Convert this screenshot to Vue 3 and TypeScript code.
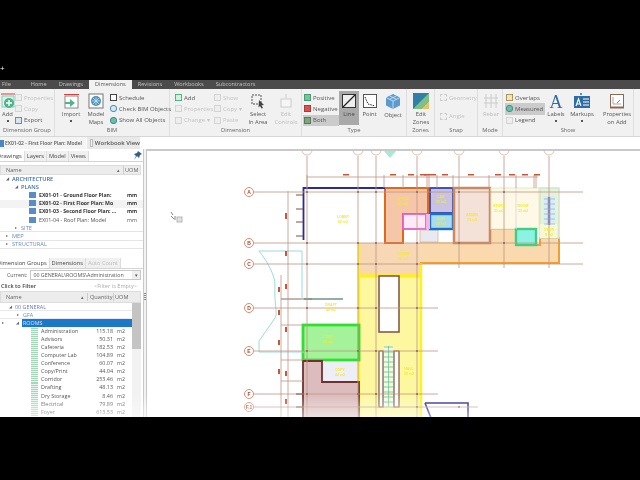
<script setup lang="ts">
const tabs = ['File', 'Home', 'Drawings', 'Dimensions', 'Revisions', 'Workbooks', 'Subcontractors']

interface TreeRow { label: string; pad: number; kind: string; arrow?: string; uom?: string }
const tree: TreeRow[] = [
  { label: 'ARCHITECTURE', pad: 6, kind: 'folder', arrow: '◢' },
  { label: 'PLANS', pad: 15, kind: 'folder', arrow: '◢' },
  { label: 'EX01-01 - Ground Floor Plan:', pad: 29, kind: 'bold', uom: 'mm' },
  { label: 'EX01-02 - First Floor Plan: Mo', pad: 29, kind: 'bold hover', uom: 'mm' },
  { label: 'EX01-03 - Second Floor Plan: ...', pad: 29, kind: 'bold', uom: 'mm' },
  { label: 'EX01-04 - Roof Plan: Model', pad: 29, kind: 'sheet-row', uom: 'mm' },
  { label: 'SITE', pad: 15, kind: 'folder muted', arrow: '▸' },
  { label: 'MEP', pad: 6, kind: 'folder muted', arrow: '▸' },
  { label: 'STRUCTURAL', pad: 6, kind: 'folder muted', arrow: '▸' },
]

const rooms = [
  ['Administration', '115.18'], ['Advisors', '50.31'], ['Cafeteria', '182.53'],
  ['Computer Lab', '104.89'], ['Conference', '60.07'], ['Copy/Print', '44.04'],
  ['Corridor', '253.46'], ['Drafting', '48.13'], ['Dry Storage', '8.46'],
  ['Electrical', '79.89'], ['Foyer', '613.53'],
]

const gridX = [307, 358, 376, 417, 459, 504, 549]
const gridLetters: [string, number, number][] = [
  ['A', 192, 583], ['B', 243, 583], ['C', 264, 583], ['D', 308, 438],
  ['E', 351, 438], ['F', 394, 438], ['F.1', 407, 478],
]
const topTicks = [307, 384, 403, 417, 427, 429, 437, 453, 489, 516, 534, 536]
const redMarks = [346, 393, 411, 423, 427, 433, 445, 471, 498, 512, 525, 537]
const anchors: [number, number][] = [
  [307, 192], [358, 192], [376, 192], [417, 192], [459, 192], [504, 192],
  [307, 243], [358, 243], [376, 243], [417, 243], [459, 243], [504, 243],
  [307, 264], [358, 264], [376, 264], [417, 264],
  [307, 308], [358, 308], [376, 308], [417, 308],
  [307, 351], [358, 351], [376, 351], [417, 351],
  [307, 394], [358, 394], [376, 394], [417, 394], [417, 407], [459, 407],
]
const roomTags: [string, string, number, number][] = [
  ['LOBBY', '82', 343, 218], ['OFFICE', '41', 403, 200], ['FOYER', '96', 403, 255], ['LAB', '19', 441, 198],
  ['BAR', '12', 441, 220], ['ADMIN', '73', 472, 216], ['STORE', '31', 499, 207], ['ROOM', '33', 523, 207],
  ['STAIR', '9', 549, 231], ['DRAFT', '48', 331, 306], ['CONF', '60', 328, 338], ['COPY', '44', 340, 371],
  ['HALL', '25', 409, 370],
]
const stairY = Array.from({ length: 12 }, (_, i) => 347 + i * 5)
const coreStair = Array.from({ length: 6 }, (_, i) => 199 + i * 5)
</script>

<template>
  <div class="screen">
    <div class="soft">
      <div class="top-black"><span class="cross">+</span></div>

      <nav class="menu">
        <span v-for="t in tabs" :key="t" class="menu-tab" :class="{ active: t === 'Dimensions', home: t === 'Home' }">{{ t }}</span>
      </nav>

      <section class="ribbon">
        <div class="group g1">
          <div class="body">
            <div class="big add-big">
              <svg width="16" height="16" viewBox="0 0 16 16"><rect x="2" y="3" width="12" height="11" fill="#dff1e6" stroke="#8cb" /><path d="M1 1h14" stroke="#c44" /><circle cx="9" cy="10" r="5" fill="#4eb58a" /><path d="M9 7v6M6 10h6" stroke="#fff" stroke-width="1.4" /></svg>
              <span>Add</span><i class="dot"></i>
            </div>
            <div class="col">
              <div class="small off"><b class="ico grey"></b>Properties</div>
              <div class="small off"><b class="ico grey"></b>Copy</div>
              <div class="small"><b class="ico blue"></b>Export</div>
            </div>
          </div>
          <div class="label">Dimension Group</div>
        </div>

        <div class="group g2">
          <div class="body">
            <div class="big w26">
              <svg width="17" height="16" viewBox="0 0 17 16"><rect x="2" y="3" width="13" height="12" fill="#fff" stroke="#888" /><path d="M1 1.5h15" stroke="#c44" /><path d="M2 9h5V6l5 4-5 4v-3H2z" fill="#4eb58a" /></svg>
              <span>Import</span><i class="dot"></i>
            </div>
            <div class="big w24">
              <svg width="16" height="16" viewBox="0 0 16 16"><rect x="1" y="1" width="14" height="14" fill="#fff" stroke="#777" /><circle cx="8" cy="8" r="5" fill="#4c8fbd" /><path d="M4 8h8M8 4v8M5 5l6 6M11 5l-6 6" stroke="#cfe4f2" stroke-width=".8" /></svg>
              <span>Model<br />Maps</span>
            </div>
            <div class="col bim">
              <div class="small"><b class="ico sheet"></b>Schedule</div>
              <div class="small"><b class="ico cyan"></b>Check BIM Objects</div>
              <div class="small"><b class="ico teal"></b>Show All Objects</div>
            </div>
          </div>
          <div class="label">BIM</div>
        </div>

        <div class="group g3">
          <div class="body">
            <div class="col w40 pad">
              <div class="small"><b class="ico green"></b>Add</div>
              <div class="small off"><b class="ico grey"></b>Properties</div>
              <div class="small off"><b class="ico grey"></b>Change ▾</div>
            </div>
            <div class="col w29">
              <div class="small off"><b class="ico grey"></b>Show</div>
              <div class="small off"><b class="ico grey"></b>Copy ▾</div>
              <div class="small off"><b class="ico grey"></b>Paste</div>
            </div>
            <div class="big w30">
              <svg width="16" height="16" viewBox="0 0 16 16"><rect x="2" y="2" width="9" height="9" fill="none" stroke="#555" stroke-dasharray="2 1" /><path d="M9 7l5 5-2.5.3L13 15l-1.500.6-1.500-2.700-1.500 1.600z" fill="#444" /></svg>
              <span>Select<br />In Area</span>
            </div>
            <div class="big w26 off">
              <svg width="16" height="16" viewBox="0 0 16 16"><rect x="3" y="6" width="10" height="8" fill="#f6f6f6" stroke="#ccc" /><path d="M8 1v4" stroke="#ccc" /></svg>
              <span>Edit<br />Controls</span>
            </div>
          </div>
          <div class="label">Dimension</div>
        </div>

        <div class="group g4">
          <div class="body">
            <div class="col w35 typecol">
              <div class="small"><b class="swatch pos"></b>Positive</div>
              <div class="small"><b class="swatch neg"></b>Negative</div>
              <div class="small picked"><b class="swatch both"></b>Both</div>
            </div>
            <div class="big w20 line-on">
              <svg width="16" height="16" viewBox="0 0 16 16"><rect x="1.500" y="1.500" width="13" height="13" fill="#eee" stroke="#333" /><path d="M2 14L14 2" stroke="#222" stroke-width="1.200" /></svg>
              <span>Line</span>
            </div>
            <div class="big w21">
              <svg width="16" height="16" viewBox="0 0 16 16"><rect x="1.500" y="1.500" width="13" height="13" fill="#fff" stroke="#555" /><path d="M3 4l3 7 7 2" fill="none" stroke="#222" stroke-dasharray="1.500 1" /></svg>
              <span>Point</span>
            </div>
            <div class="big w26">
              <svg width="16" height="17" viewBox="0 0 16 17"><path d="M8 1l7 3.500v8L8 16l-7-3.500v-8z" fill="#5b9bd0" /><path d="M1 4.500L8 8l7-3.500M8 8v8M4.500 2.800l7 3.500M11.500 2.800l-7 3.500" fill="none" stroke="#d4e8f6" stroke-width=".8" /></svg>
              <span>Object</span>
            </div>
          </div>
          <div class="label">Type</div>
        </div>

        <div class="group g5">
          <div class="body">
            <div class="big w28">
              <svg width="16" height="16" viewBox="0 0 16 16"><rect width="16" height="16" fill="#2f7fa8" /><path d="M0 16L16 0v8L8 16z" fill="#7cc08a" /><path d="M8 16l8-8v8z" fill="#e4c46a" /></svg>
              <span>Edit<br />Zones</span>
            </div>
          </div>
          <div class="label">Zones</div>
        </div>

        <div class="group g6">
          <div class="body">
            <div class="col snap">
              <div class="small off"><b class="ico dash"></b>Geometry</div>
              <div class="small off"><b class="ico dash"></b>Angle</div>
            </div>
          </div>
          <div class="label">Snap</div>
        </div>

        <div class="group g7">
          <div class="body">
            <div class="big w26 off">
              <svg width="16" height="16" viewBox="0 0 16 16"><path d="M1 5h14M1 10h14M3 1v14M8 1v14M13 1v14" stroke="#ccc" /></svg>
              <span>Rebar</span>
            </div>
          </div>
          <div class="label">Mode</div>
        </div>

        <div class="group g8">
          <div class="body">
            <div class="col show-col">
              <div class="small"><b class="ico amber"></b>Overlaps</div>
              <div class="small picked"><b class="ico teal"></b>Measured</div>
              <div class="small"><b class="ico grey"></b>Legend</div>
            </div>
            <div class="big w22">
              <span class="letter">A</span>
              <span>Labels</span><i class="dot"></i>
            </div>
            <div class="big w30">
              <svg width="16" height="16" viewBox="0 0 16 16"><rect y="3" width="16" height="12" fill="#2e6da4" /><path d="M9 6h6M9 9h6M9 12h6" stroke="#fff" /><path d="M2 13l2.500-7L7 13M3 11h3" fill="none" stroke="#fff" stroke-width="1.100" /><circle cx="7" cy="1" r="1" fill="#2e6da4" /></svg>
              <span>Markups</span><i class="dot"></i>
            </div>
            <div class="big w38">
              <svg width="16" height="16" viewBox="0 0 16 16"><rect x="1.500" y="1.500" width="13" height="13" fill="#fff" stroke="#8a6a50" /><path d="M1 14.500h14" stroke="#8a6a50" stroke-width="2" /><path d="M4 4v7h8" fill="none" stroke="#aaa" /><path d="M8 10l3-3" stroke="#5a9a60" /></svg>
              <span>Properties<br />on Add</span>
            </div>
          </div>
          <div class="label">Show</div>
        </div>
      </section>

      <div class="docs">
        <div class="doc"><b class="plan-ico"></b>EX01-02 - First Floor Plan: Model</div>
        <div class="doc alt"><b class="grid-ico"></b>Workbook View</div>
      </div>

      <main class="work">
        <aside class="panel">
          <div class="ptabs">
            <span class="ptab on crop">Drawings</span><span class="ptab">Layers</span><span class="ptab">Model</span><span class="ptab">Views</span>
            <svg class="pin" width="8" height="9" viewBox="0 0 8 9"><path d="M4 0l4 3-2 1-1 3-2-2-3 4 2-4-2-2 3-1z" fill="#2f5f8a" /></svg>
          </div>
          <div class="thead">
            <span class="th-name">Name</span><span class="sort">▴</span><span class="th-uom">UOM</span>
          </div>
          <div class="tree">
            <div v-for="r in tree" :key="r.label" class="trow" :class="r.kind" :style="{ paddingLeft: r.pad + 'px' }">
              <span v-if="r.arrow" class="arrow">{{ r.arrow }}</span>
              <b v-if="r.uom" class="tree-ico"></b>
              <span class="tlabel">{{ r.label }}</span>
              <span v-if="r.uom" class="tuom">{{ r.uom }}</span>
            </div>
          </div>

          <div class="ptabs second">
            <span class="ptab on crop">Dimension Groups</span><span class="ptab">Dimensions</span><span class="ptab off">Auto Count</span>
          </div>
          <div class="current">
            <span>Current:</span><span class="combo">00 GENERAL\ROOMS\Administration<i>▾</i></span>
          </div>
          <div class="filter"><b>Click to Filter</b><span>&lt;Filter is Empty&gt;</span></div>
          <div class="thead two">
            <span class="th-name">Name</span><span class="sort">▴</span><span class="th-q">Quantity</span><span class="th-u">UOM</span>
          </div>
          <div class="dim-wrap">
            <div class="dim-list">
              <div class="drow g0"><span class="arrow">◢</span>00 GENERAL</div>
              <div class="drow g1x"><span class="arrow">▸</span>GFA</div>
              <div class="drow sel"><span class="arrow far">▸</span><span class="arrow">◢</span><span class="sel-label">ROOMS</span></div>
              <div v-for="r in rooms" :key="r[0]" class="drow room">
                <b class="room-ico"></b><span class="rname">{{ r[0] }}</span><span class="rq">{{ r[1] }}</span><span class="ru">m2</span>
              </div>
            </div>
            <div class="scroll"><div class="thumb"></div></div>
          </div>
        </aside>
        <div class="split"><i></i></div>

        <div class="canvas">
          <svg class="drawing" width="493" height="266" viewBox="147 151 493 266">
            <!-- floor fills -->
            <path d="M359 243H385V276H359Z" fill="#f8d8b4" />
            <path d="M385 243h35v33h-35z" fill="#f8d8b4" />
            <path d="M420 242h33v1h37v-14h26v16h24v-7h19v25h-139z" fill="#fad9ae" />
            <path d="M359 243V276H421V263H559V238H540V245H516V229H490" fill="none" stroke="#f0a030" stroke-width="2" />
            <path d="M359 276h62v141h-62z" fill="#fdf8a0" />
            <path d="M359 243v173M421 263v154" fill="none" stroke="#fff020" stroke-width="2.500" />
            <path d="M358 276h63" stroke="#fff020" stroke-width="3.500" />
            <path d="M385 188h43v26h-25v29h-18z" fill="#f6c6a8" stroke="#e0681c" stroke-width="2" />
            <rect x="403" y="214" width="23" height="15" fill="#fdeaf6" stroke="#e060c8" stroke-width="1.800" />
            <rect x="420" y="230" width="18" height="12" fill="#e9e9f2" stroke="#d8b898" stroke-width=".8" />
            <rect x="430" y="188" width="23" height="25" fill="#c9c2e2" stroke="#3445a8" stroke-width="1.800" />
            <rect x="430" y="214" width="23" height="15" fill="#a9dcf2" stroke="#1a70c8" stroke-width="2.400" />
            <rect x="426" y="214" width="4" height="15" fill="#fbb0e0" />
            <rect x="454" y="188" width="36" height="55" fill="#f4e1d7" stroke="#c88a60" stroke-width="2.500" />
            <rect x="491" y="188" width="48" height="41" fill="#fdf9e6" stroke="#e8e8c8" />
            <rect x="516" y="229" width="20" height="16" fill="#8cf2e4" stroke="#3ed080" stroke-width="2.400" />
            <path d="M516 188v41" stroke="#ddd" />
            <rect x="540" y="188" width="19" height="50" fill="#e6f3dc" stroke="#d4e4c8" stroke-width="1.500" />
            <rect x="540" y="224" width="17" height="14" fill="#f8f8d8" />
            <rect x="543" y="196" width="12" height="28" fill="#d8eef0" />
            <path d="M549 197v28" stroke="#8878c8" stroke-width="2.500" />
            <path v-for="y in coreStair" :key="y" :d="`M544 ${y}h11`" stroke="#7fb4d8" stroke-width=".7" />

            <!-- left rooms -->
            <rect x="303" y="325" width="56" height="35" fill="#a4f29a" stroke="#30e030" stroke-width="2.800" />
            <path d="M303 361h19v21h37v36h-56z" fill="#dcbcbc" stroke="#703030" stroke-width="1.800" />
            <path d="M323 362h35v19h-35z" fill="#eeeef6" />
            <path d="M379 276h20v56h-20z" fill="#fff" stroke="#805040" stroke-width="1.500" />
            <path d="M379 351h4v56h-4zM394 351h5v56h-5z" fill="#fff" stroke="#805040" stroke-width="1.200" />
            <path d="M384 346h9v61h-9z" fill="#f3fbe6" />
            <path v-for="y in stairY" :key="y" :d="`M384 ${y}h9`" stroke="#60c080" stroke-width=".8" />
            <path d="M388.500 346v61" stroke="#60c080" stroke-width=".7" />
            <path d="M303.500 240V188H385" fill="none" stroke="#2a2a9a" stroke-width="1.800" />
            <path d="M425 403h43v15M425 403l6 15" fill="none" stroke="#1c1c90" stroke-width="1.600" />
            <path d="M281 299h31" stroke="#8a6a5a" />
            <path d="M304 299h39" stroke="#6f9484" stroke-width="1.500" />

            <!-- cyan entrance curve -->
            <path d="M259 251H302V300M259 251C268 262 275 276 275 285 C274 305 278 313 275 318 L259 341 V352 H304" fill="none" stroke="#9adcd8" />

            <!-- grid -->
            <g stroke="#bd9484" stroke-width=".8" fill="none">
              <path v-for="x in gridX.slice(0, 4)" :key="x" :d="`M${x} 156V417`" />
              <path v-for="x in gridX.slice(4)" :key="x" :d="`M${x} 156V268`" />
              <path v-for="g in gridLetters" :key="g[0]" :d="`M254 ${g[1]}H${g[2]}`" />
              <path d="M307 177H538" />
              <path v-for="x in topTicks" :key="x" :d="`M${x} 175V188`" />
              <path d="M288 191V417M281 275V417M281 325h22M281 360h22M281 381h22" />
              <circle v-for="x in gridX" :key="x" :cx="x" cy="150" r="5" fill="#fff" stroke="#e0ae98" />
            </g>
            <g stroke="#7a5040" stroke-width="1">
              <path d="M296 195h7M296 209h7M296 222h7M296 236h7M296 394h7M296 407h7" />
            </g>
            <g fill="#8a6a5c">
              <circle v-for="(a, i) in anchors" :key="i" :cx="a[0]" :cy="a[1]" r="1" />
            </g>
            <g fill="#c8553c">
              <rect v-for="x in redMarks" :key="x" :x="x - 3" y="174" width="6" height="1.500" />
              <rect x="285" y="213" width="2" height="6" />
              <rect x="285" y="251" width="2" height="5" />
              <rect x="278" y="287" width="2" height="5" />
              <rect x="285" y="284" width="2" height="5" />
              <rect x="278" y="310" width="2" height="5" />
              <rect x="285" y="327" width="2" height="5" />
              <rect x="278" y="340" width="2" height="5" />
              <rect x="278" y="369" width="2" height="5" />
              <rect x="285" y="371" width="2" height="5" />
              <rect x="285" y="399" width="2" height="5" />
            </g>
            <path d="M384 151h12l-6 7z" fill="#a4ead8" />
            <g class="tag" fill="#f2ea30">
              <text v-for="t in roomTags" :key="t[0]" :x="t[2]" :y="t[3]" text-anchor="middle">{{ t[0] }}</text>
              <text v-for="t in roomTags" :key="t[0] + 'n'" :x="t[2]" :y="t[3] + 5" text-anchor="middle">{{ t[1] }} m2</text>
            </g>
            <g v-for="g in gridLetters" :key="g[0]">
              <circle cx="249" :cy="g[1]" r="4.500" fill="#fff" stroke="#d88c74" />
              <text class="gl" x="249" :y="g[1] + 2" text-anchor="middle">{{ g[0] }}</text>
            </g>
            <!-- pointer -->
            <g stroke="#666" fill="none" stroke-width=".8">
              <path d="M171 212l2 3M171 216l3 3M175 216v4" />
              <rect x="177" y="217" width="5" height="5" fill="#e2e2e2" stroke="#aaa" />
            </g>
          </svg>
        </div>
      </main>

      <div class="bottom-black"></div>
    </div>
    <div class="fade"></div>
  </div>
</template>

<style>
html, body { margin: 0; background: #000; overflow: hidden; }
</style>

<style scoped>
.screen { position: relative; width: 640px; height: 480px; overflow: hidden; background: #000;
  font-family: "Open Sans", "Liberation Sans", sans-serif; font-size: 6px; color: #444; }
.soft { display: flex; flex-direction: column; width: 640px; height: 480px; filter: blur(0.5px); }
.top-black { height: 80px; background: #000; color: #fff; flex: none; }
.cross { display: block; font-size: 8px; line-height: 8px; padding-top: 64px; }
.menu { height: 9px; flex: none; background: #4b4b4b; display: flex; align-items: center; color: #c4c4c4; font-size: 5.600px; padding-left: 2px; gap: 12px; }
.menu-tab { line-height: 9px; white-space: nowrap; }
.menu-tab.home { margin-left: 8px; }
.menu-tab.active { background: #f1f1f1; color: #555; height: 9px; padding: 0 6px; margin: 0 -6px; }
.ribbon { height: 48px; flex: none; display: flex; background: #f1f1f1; border-bottom: 1px solid #d6d6d6; box-sizing: border-box; }
.group { display: flex; flex-direction: column; border-right: 1px solid #dedede; box-sizing: border-box; flex: none; }
.g1 { width: 55px; } .g2 { width: 115px; } .g3 { width: 132px; } .g4 { width: 105px; }
.g5 { width: 28px; } .g6 { width: 43px; } .g7 { width: 25px; } .g8 { width: 131px; }
.body { flex: 1; display: flex; min-height: 0; }
.label { height: 10px; line-height: 9px; text-align: center; color: #666; font-size: 5.800px; white-space: nowrap; }
.big { display: flex; flex-direction: column; align-items: center; padding-top: 4px; box-sizing: border-box; line-height: 7.500px; text-align: center; flex: none; color: #555; font-size: 5.800px; }
.big svg { flex: none; margin-bottom: 2px; }
.add-big { width: 15px; }
.w20 { width: 20px; } .w21 { width: 21px; } .w22 { width: 22px; } .w24 { width: 24px; } .w26 { width: 26px; } .w28 { width: 28px; } .w30 { width: 30px; } .w38 { width: 40px; }
.w35 { width: 37px; } .w40 { width: 44px; } .w29 { width: 29px; }
.g2 .big:first-child { margin-left: 3px; }
.off { color: #bdbdbd; }
.dot { width: 2px; height: 2px; background: #555; margin-top: 1px; }
.col { display: flex; flex-direction: column; padding-top: 3px; box-sizing: border-box; flex: none; }
.col.pad { padding-left: 5px; }
.col.bim { padding-left: 2px; }
.small { height: 11.500px; display: flex; align-items: center; gap: 2px; white-space: nowrap; color: #555; }
.small.off { color: #c4c4c4; }
.ico { width: 7px; height: 7px; display: block; flex: none; box-sizing: border-box; }
.grey { background: #eee; border: 1px solid #d4d4d4; }
.blue { background: #d8e6f2; border: 1px solid #6a8cae; }
.sheet { background: #fff; border: 1px solid #444; }
.cyan { background: #cfe8f4; border: 1px solid #4a8cb8; border-radius: 3px; }
.teal { background: #6bbfa8; border: 1px solid #3f8c88; border-radius: 3px; }
.green { background: #d6f0e0; border: 1px solid #4eb58a; }
.dash { border: 1px dashed #ccc; }
.amber { background: #f4e4b8; border: 1px solid #a89860; }
.typecol { padding-left: 2px; }
.swatch { width: 7px; height: 7px; display: block; flex: none; box-sizing: border-box; }
.pos { background: #72c69a; border: 1px solid #4a9a74; }
.neg { background: #d8534f; border: 1px solid #aa3a38; }
.both { background: #79a87c; border: 1px solid #5a7a5c; }
.picked { background: #cbcbcb; margin-left: -1px; padding-left: 1px; }
.line-on { background: #a9a9a9; height: 34px; margin-top: 2px; padding-top: 2px; color: #444; }
.snap { padding-left: 5px; gap: 7px; }
.show-col { width: 42px; padding-left: 3px; }
.letter { font-family: "Liberation Serif", serif; font-size: 18px; line-height: 18px; height: 18px; color: #2e6da4; }
.docs { height: 12px; flex: none; display: flex; background: #fff; align-items: stretch; }
.doc { display: flex; align-items: center; gap: 1px; font-size: 5px; font-weight: 600; color: #555; white-space: nowrap; width: 86px; background: #f4f4f4; box-sizing: border-box; }
.doc.alt { width: 53px; background: #e9e9e9; margin-left: 1px; gap: 2px; padding-left: 3px; font-size: 6px; }
.plan-ico { width: 4px; height: 7px; display: block; flex: none; background: #4a86c0; }
.grid-ico { width: 7px; height: 8px; display: block; border: 1px solid #bbb; box-sizing: border-box; background: #f4f4f4; }
.work { height: 268px; flex: none; display: flex; background: #fff; }
.panel { width: 143px; flex: none; display: flex; flex-direction: column; background: #fff; overflow: hidden; }
.ptabs { position: relative; height: 13px; flex: none; display: flex; align-items: flex-end; border-bottom: 1px solid #d4d4d4; box-sizing: border-box; }
.ptab { padding: 0 2px; line-height: 10px; color: #444; border-right: 1px solid #ddd; background: #f0f0f0; white-space: nowrap; font-size: 5.700px; }
.ptab.on { background: #fff; }
.ptab.off { color: #bbb; }
.crop { margin-left: -5px; }
.pin { position: absolute; right: 1px; top: 2px; }
.thead { height: 8px; flex: none; margin: 3px 2px 0 0; display: flex; align-items: center; background: #ececec; border: 1px solid #dcdcdc; box-sizing: content-box; color: #666; font-size: 5.600px; line-height: 8px; }
.th-name { margin-left: 5px; flex: 1; }
.sort { font-size: 5px; margin-right: 3px; }
.th-uom { width: 15px; border-left: 1px solid #ccc; padding-left: 1px; }
.tree { height: 80px; flex: none; }
.trow { height: 8.200px; display: flex; align-items: center; line-height: 8px; color: #3f6bb0; font-size: 5.700px; white-space: nowrap; border-bottom: 1px solid transparent; box-sizing: border-box; }
.trow.muted { color: #6a8ac0; border-bottom-color: #e4e4ec; }
.trow.folder { font-weight: 600; }
.trow.folder.muted { font-weight: 400; }
.trow.bold { color: #333; font-weight: 700; font-size: 5.200px; }
.trow.sheet-row { color: #555; font-size: 5.400px; }
.trow.hover { background: #f3f3f3; }
.arrow { display: block; width: 6px; flex: none; font-size: 4px; color: #666; }
.tree-ico { display: block; flex: none; width: 7px; height: 6px; background: #5a8cc8; margin-right: 3px; }
.tlabel { width: 88px; overflow: hidden; flex: none; }
.second { height: 12px; margin-top: 2px; }
.current { height: 12px; flex: none; display: flex; align-items: center; gap: 3px; padding-left: 7px; color: #555; font-size: 5.300px; }
.combo { flex: 1; min-width: 0; border: 1px solid #c8c8c8; height: 10px; line-height: 9px; box-sizing: border-box; padding-left: 2px; display: flex; justify-content: space-between; margin-right: 2px; white-space: nowrap; overflow: hidden; }
.combo i { font-style: normal; background: #eee; width: 8px; text-align: center; }
.filter { height: 10px; flex: none; display: flex; justify-content: space-between; align-items: center; padding: 0 6px 0 1px; color: #aaa; font-size: 5.600px; }
.filter b { color: #444; font-weight: 600; }
.two { margin-top: 0; height: 10px; }
.th-q { width: 23px; border-left: 1px solid #ccc; padding-left: 2px; }
.th-u { width: 15px; border-left: 1px solid #ccc; padding-left: 1px; margin-right: 10px; }
.dim-wrap { flex: 1; display: flex; min-height: 0; overflow: hidden; }
.dim-list { width: 132px; flex: none; }
.drow { height: 8.050px; line-height: 8px; font-size: 5.400px; color: #555; display: flex; align-items: center; white-space: nowrap; }
.g0 { padding-left: 9px; color: #6a7ab8; border-bottom: 1px solid #e8e8ee; box-sizing: border-box; }
.g1x { padding-left: 17px; color: #6a8ac0; border-bottom: 1px solid #e8e8ee; box-sizing: border-box; }
.sel { padding-left: 2px; }
.arrow.far { width: 14px; }
.sel-label { display: block; background: #1c78c8; color: #cfe6fa; flex: 1; height: 8px; padding-left: 1px; }
.room-ico { width: 7px; height: 8.050px; margin-left: 31px; flex: none; display: block;
  background: repeating-linear-gradient(0deg, #a8d4bc 0 1px, #e8f5ee 1px 2px); }
.rname { margin-left: 3px; width: 48px; flex: none; }
.rq { width: 24px; text-align: right; flex: none; }
.ru { margin-left: 4px; }
.scroll { width: 9px; flex: none; background: #f2f2f2; }
.thumb { height: 46px; background: #c4c4c4; }
.split { width: 2px; flex: none; background: #f2f2f2; border-left: 1px solid #c8c8c8; border-right: 1px solid #c8c8c8; position: relative; }
.split i { position: absolute; left: 0; top: 143px; width: 2px; height: 8px; background: repeating-linear-gradient(0deg, #888 0 1px, transparent 1px 2px); }
.canvas { flex: 1; min-width: 0; border-top: 2px solid #c9c9c9; box-sizing: border-box; overflow: hidden; background: #fff; }
.drawing { display: block; }
.tag text { font-size: 3.500px; font-family: "Liberation Sans", sans-serif; font-weight: 700; }
.gl { font-size: 5px; fill: #a04a30; font-family: "Liberation Sans", sans-serif; font-weight: 700; }
.bottom-black { flex: 1; background: #000; }
.fade { position: absolute; left: 0; right: 0; top: 395px; height: 22px; background: linear-gradient(to bottom, rgba(255, 255, 255, 0), rgba(255, 255, 255, .55)); }
</style>
